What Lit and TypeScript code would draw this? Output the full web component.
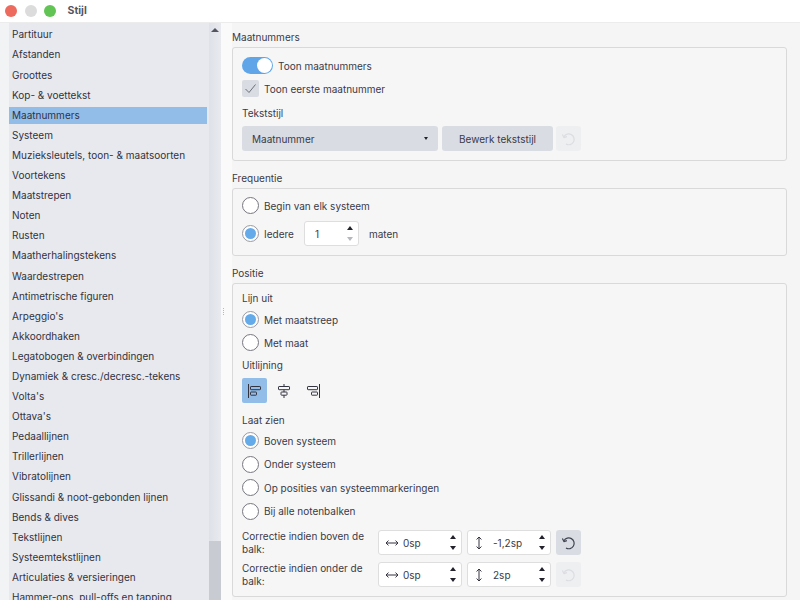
import { LitElement, html, css, svg } from 'lit';
import { customElement } from 'lit/decorators.js';

const ITEMS = [
  'Partituur', 'Afstanden', 'Groottes', 'Kop- & voettekst', 'Maatnummers', 'Systeem',
  'Muzieksleutels, toon- & maatsoorten', 'Voortekens', 'Maatstrepen', 'Noten', 'Rusten',
  'Maatherhalingstekens', 'Waardestrepen', 'Antimetrische figuren', "Arpeggio's", 'Akkoordhaken',
  'Legatobogen & overbindingen', 'Dynamiek & cresc./decresc.-tekens', "Volta's", "Ottava's",
  'Pedaallijnen', 'Trillerlijnen', 'Vibratolijnen', 'Glissandi & noot-gebonden lijnen',
  'Bends & dives', 'Tekstlijnen', 'Systeemtekstlijnen', 'Articulaties & versieringen',
  'Hammer-ons, pull-offs en tapping',
];

const resetIcon = svg`<svg width="16" height="16" viewBox="0 0 16 16" fill="none" stroke="currentColor" stroke-width="1.2">
  <path d="M5 13A5.4 5.4 0 1 0 3 5.8"/><path d="M1.4 3.6 2.9 6.6 5.9 5.6" stroke-linejoin="round"/></svg>`;

const hArrow = svg`<svg width="14" height="8" viewBox="0 0 14 8" fill="none" stroke="#33333f" stroke-width="1">
  <path d="M1 4h12M3.5 1.6 1 4l2.5 2.4M10.5 1.6 13 4l-2.5 2.4"/></svg>`;

const vArrow = svg`<svg width="8" height="14" viewBox="0 0 8 14" fill="none" stroke="#33333f" stroke-width="1">
  <path d="M4 1v12M1.6 3.5 4 1l2.4 2.5M1.6 10.5 4 13l2.4-2.5"/></svg>`;

const alignLeft = svg`<svg width="16" height="16" viewBox="0 0 16 16" fill="none" stroke="#33333f" stroke-width="1">
  <path d="M1.5 1v14"/><rect x="3.5" y="3.5" width="10" height="3.2" rx=".6"/><rect x="3.5" y="9" width="6" height="3.2" rx=".6"/></svg>`;
const alignCenter = svg`<svg width="16" height="16" viewBox="0 0 16 16" fill="none" stroke="#33333f" stroke-width="1">
  <path d="M8 1v2.5M8 6.7V9M8 12.2V15"/><rect x="2.5" y="3.5" width="11" height="3.2" rx=".6"/><rect x="5" y="9" width="6" height="3.2" rx=".6"/></svg>`;
const alignRight = svg`<svg width="16" height="16" viewBox="0 0 16 16" fill="none" stroke="#33333f" stroke-width="1">
  <path d="M14.5 1v14"/><rect x="2.5" y="3.5" width="10" height="3.2" rx=".6"/><rect x="6.5" y="9" width="6" height="3.2" rx=".6"/></svg>`;
const check = svg`<svg width="17" height="17" viewBox="0 0 17 17" fill="none" stroke="#6c6e78" stroke-width="1">
  <path d="M3.5 9 7 12.5 13.5 4.5"/></svg>`;

@customElement('app-root')
export class AppRoot extends LitElement {
  static styles = css`
    :host {
      display: flex;
      flex-direction: column;
      width: 800px;
      height: 600px;
      overflow: hidden;
      background: #f5f5f5;
      font-family: Inter, 'Liberation Sans', sans-serif;
      font-size: 10px;
      color: #3a3a48;
    }
    .titlebar {
      flex: none;
      display: flex;
      align-items: center;
      height: 23px;
      box-sizing: border-box;
      padding: 0 0 1px 5px;
      background: #fff;
      border-bottom: 1px solid #ececec;
    }
    .light { width: 12px; height: 12px; border-radius: 50%; margin-right: 7.5px; }
    .title { margin-left: 4px; font-weight: 700; color: #55555f; font-size: 10.5px; }
    .main { flex: 1; display: flex; min-height: 0; }

    .side {
      flex: none;
      width: 221px;
      display: flex;
      background: #f2f3f5;
      box-sizing: border-box;
      padding-left: 9px;
    }
    .list {
      width: 200px;
      box-sizing: border-box;
      padding: 3.4px 2px 0 0;
      background: #e8e9ee;
      display: flex;
      flex-direction: column;
      gap: 3px;
      overflow: hidden;
    }
    .item {
      flex: none;
      height: 17.1px;
      line-height: 17.1px;
      padding-left: 3px;
      white-space: nowrap;
      color: #32323e;
    }
    .item.sel { background: #92bde9; }
    .scroll {
      width: 12px;
      display: flex;
      flex-direction: column;
      background: linear-gradient(90deg, #dfe1e8, #e8eaf0);
    }
    .scroll .up {
      height: 15px;
      display: flex;
      justify-content: center;
      padding-top: 5px;
      box-sizing: border-box;
    }
    .tri-up { width: 0; height: 0; border: 4px solid transparent; border-top: 0; border-bottom: 4px solid #55555f; }
    .scroll .track { flex: 1; }
    .scroll .thumb { height: 59px; background: #c8cbd1; }

    .split {
      flex: none;
      width: 11px;
      display: flex;
      flex-direction: column;
      align-items: flex-start;
      justify-content: center;
      gap: 1px;
      padding-left: 2px;
      box-sizing: border-box;
      background: #fafafa;
    }
    .split i { display: block; width: 1px; height: 1px; background: #b8b8be; }

    .content { flex: 1; padding: 7px 13px 0 0; min-width: 0; }
    .heading { height: 17px; line-height: 14px; color: #3a3a48; }
    .panel {
      box-sizing: border-box;
      border: 1px solid #d9d9d9;
      border-radius: 3px;
      padding: 0 9px;
      display: flex;
      flex-direction: column;
      margin-bottom: 10px;
      background: #f6f6f6;
    }
    .p1 { height: 114px; padding-top: 9px; }
    .p2 { height: 68px; padding-top: 8px; }
    .p3 { height: 314px; padding-top: 7px; }

    .row { display: flex; align-items: center; }
    .radio-row { height: 17px; }
    .toggle {
      width: 31px;
      height: 17px;
      border-radius: 9px;
      background: #5fa5e8;
      display: flex;
      justify-content: flex-end;
      align-items: center;
      padding-right: 1px;
      box-sizing: border-box;
      margin-right: 5px;
    }
    .toggle i { display: block; width: 15px; height: 15px; border-radius: 50%; background: #fff; }
    .checkbox { width: 17px; height: 17px; background: #d9dce2; border-radius: 2px; margin-right: 5px; }
    .checkbox svg { display: block; }
    .label { height: 14px; line-height: 14px; }

    .ctl {
      height: 25px;
      border-radius: 3px;
      background: #d9dce2;
      display: flex;
      align-items: center;
      box-sizing: border-box;
    }
    .select { width: 196px; padding: 0 10px; justify-content: space-between; }
    .tri-down { width: 0; height: 0; border: 2.5px solid transparent; border-bottom: 0; border-top: 3.5px solid #22222c; }
    .btn { width: 111px; justify-content: center; margin-left: 4px; }
    .reset { width: 25px; justify-content: center; margin-left: 3px; color: #3f4450; }
    .reset.off { background: #eeeff1; color: #dcdde1; }
    .reset.wide { margin-left: 5px; }

    .radio {
      flex: none;
      width: 17px;
      height: 17px;
      box-sizing: border-box;
      border: 1px solid #777780;
      border-radius: 50%;
      background: #fff;
      margin-right: 5px;
      display: flex;
      align-items: center;
      justify-content: center;
    }
    .radio.on { border-color: #9a9aa2; }
    .radio.on i { display: block; width: 11px; height: 11px; border-radius: 50%; background: #66abe9; }

    .spin {
      box-sizing: border-box;
      background: #fff;
      border: 1px solid #dedede;
      border-radius: 3px;
      display: flex;
      align-items: center;
      position: relative;
    }
    .steps {
      position: absolute;
      right: 5px;
      top: 4px;
      display: flex;
      flex-direction: column;
      gap: 7px;
    }
    .s-up, .s-down { width: 0; height: 0; border: 3px solid transparent; }
    .s-up { border-top: 0; border-bottom: 4px solid #22222c; }
    .s-down { border-bottom: 0; border-top: 4px solid #22222c; }
    .s-down.dim { border-top-color: #b5b7bd; }

    .freq { width: 55px; height: 25px; padding-left: 10px; margin: 0 10px 0 10px; }
    .num { width: 84px; height: 25px; }
    .num svg { flex: none; }
    .num .h { margin: 0 4px 0 6px; display: flex; }
    .num .v { margin: 0 10px 0 7px; display: flex; }
    .num + .num { margin-left: 5px; }
    .corr-label { width: 136px; line-height: 13px; }

    .aligns { display: flex; gap: 4px; }
    .al { width: 25px; height: 25px; display: flex; align-items: center; justify-content: center; border-radius: 2px; }
    .al.on { background: #92bde9; }
    .mt5 { margin-top: 5px; }
    .mt6 { margin-top: 6px; }
    .mt65 { margin-top: 6.5px; }
    .mt7 { margin-top: 7px; }
    .mt9 { margin-top: 9px; }
    .mt10 { margin-top: 10px; }
  `;

  private radio(text: string, on = false) {
    return html`<div class="row radio-row">
      <span class="radio ${on ? 'on' : ''}">${on ? html`<i></i>` : ''}</span>${text}
    </div>`;
  }

  private num(icon: unknown, cls: string, value: string) {
    return html`<div class="spin num">
      <span class=${cls}>${icon}</span>${value}
      <span class="steps"><i class="s-up"></i><i class="s-down"></i></span>
    </div>`;
  }

  render() {
    return html`
      <div class="titlebar">
        <span class="light" style="background:#ec6a5e"></span>
        <span class="light" style="background:#dcdcdc"></span>
        <span class="light" style="background:#61c454"></span>
        <span class="title">Stijl</span>
      </div>
      <div class="main">
        <div class="side">
          <div class="list">
            ${ITEMS.map((t, i) => html`<div class="item ${i === 4 ? 'sel' : ''}">${t}</div>`)}
          </div>
          <div class="scroll">
            <div class="up"><i class="tri-up"></i></div>
            <div class="track"></div>
            <div class="thumb"></div>
          </div>
        </div>
        <div class="split"><i></i><i></i><i></i><i></i></div>
        <div class="content">
          <div class="heading">Maatnummers</div>
          <div class="panel p1">
            <div class="row"><span class="toggle"><i></i></span>Toon maatnummers</div>
            <div class="row mt6"><span class="checkbox">${check}</span>Toon eerste maatnummer</div>
            <div class="label mt9">Tekststijl</div>
            <div class="row mt6">
              <div class="ctl select">Maatnummer<i class="tri-down"></i></div>
              <div class="ctl btn">Bewerk tekststijl</div>
              <div class="ctl reset off">${resetIcon}</div>
            </div>
          </div>
          <div class="heading">Frequentie</div>
          <div class="panel p2">
            ${this.radio('Begin van elk systeem')}
            <div class="row mt7">
              <span class="radio on"><i></i></span>Iedere
              <div class="spin freq">1
                <span class="steps"><i class="s-up"></i><i class="s-down dim"></i></span>
              </div>
              maten
            </div>
          </div>
          <div class="heading">Positie</div>
          <div class="panel p3">
            <div class="label">Lijn uit</div>
            <div class="mt6">${this.radio('Met maatstreep', true)}</div>
            <div class="mt6">${this.radio('Met maat')}</div>
            <div class="label mt7">Uitlijning</div>
            <div class="aligns mt6">
              <span class="al on">${alignLeft}</span>
              <span class="al">${alignCenter}</span>
              <span class="al">${alignRight}</span>
            </div>
            <div class="label mt10">Laat zien</div>
            <div class="mt5">${this.radio('Boven systeem', true)}</div>
            <div class="mt65">${this.radio('Onder systeem')}</div>
            <div class="mt65">${this.radio('Op posities van systeemmarkeringen')}</div>
            <div class="mt65">${this.radio('Bij alle notenbalken')}</div>
            <div class="row mt10">
              <div class="corr-label">Correctie indien boven de balk:</div>
              ${this.num(hArrow, 'h', '0sp')}
              ${this.num(vArrow, 'v', '-1,2sp')}
              <div class="ctl reset wide">${resetIcon}</div>
            </div>
            <div class="row mt6">
              <div class="corr-label">Correctie indien onder de balk:</div>
              ${this.num(hArrow, 'h', '0sp')}
              ${this.num(vArrow, 'v', '2sp')}
              <div class="ctl reset off wide">${resetIcon}</div>
            </div>
          </div>
        </div>
      </div>
    `;
  }
}
